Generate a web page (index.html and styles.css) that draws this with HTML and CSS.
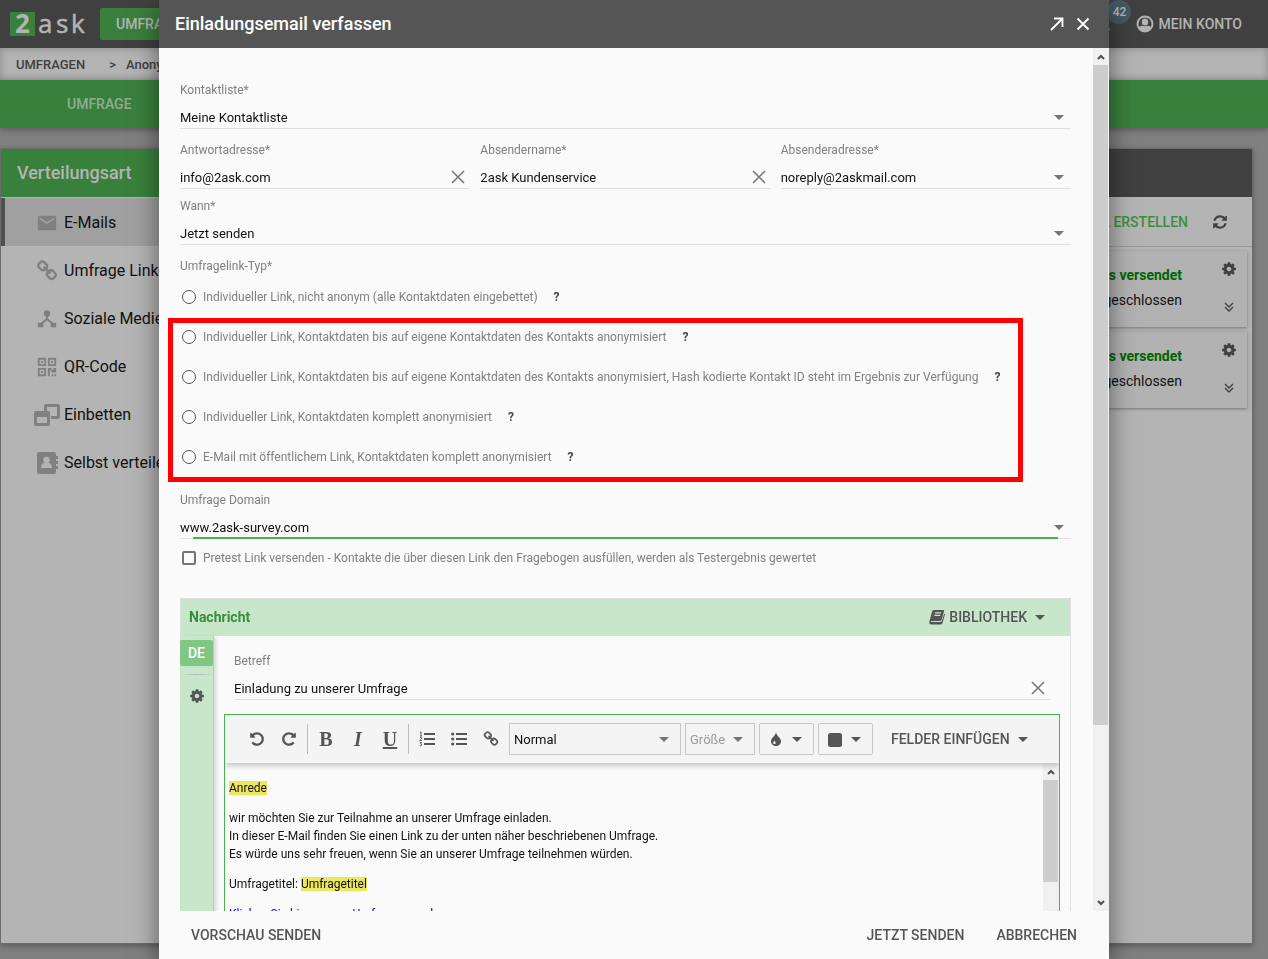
FILE: index.html
```html
<!DOCTYPE html>
<html lang="de">
<head>
<meta charset="utf-8">
<meta name="viewport" content="width=device-width, initial-scale=1">
<title>Einladungsemail verfassen</title>
<link rel="stylesheet" href="styles.css">
</head>
<body>
<svg class="sprite" aria-hidden="true">
  <symbol id="caret" viewBox="0 0 10 5"><path d="M0 0h10L5 5z"/></symbol>
  <symbol id="cross" viewBox="0 0 14 14"><path d="M1 1l12 12M13 1L1 13" fill="none" stroke="currentColor" stroke-width="1.5"/></symbol>
  <symbol id="cog" viewBox="0 0 1792 1792"><path d="M1152 896q0-106-75-181t-181-75-181 75-75 181 75 181 181 75 181-75 75-181zm512-109v222q0 12-8 23t-20 13l-185 28q-19 54-39 91 35 50 107 138 10 12 10 25t-9 23q-27 37-99 108t-94 71q-12 0-26-9l-138-108q-44 23-91 38-16 136-29 186-7 28-36 28h-222q-14 0-24.5-8.5t-11.5-21.5l-28-184q-49-16-90-37l-141 107q-10 9-25 9-14 0-25-11-126-114-165-168-7-10-7-23 0-12 8-23 15-21 51-66.5t54-70.5q-27-50-41-99l-183-27q-13-2-21-12.5t-8-23.5v-222q0-12 8-23t19-13l186-28q14-46 39-92-40-57-107-138-10-12-10-24 0-10 9-23 26-36 98.5-107.5t94.5-71.5q13 0 26 10l138 107q44-23 91-38 16-136 29-186 7-28 36-28h222q14 0 24.5 8.5t11.5 21.5l28 184q49 16 90 37l142-107q9-9 24-9 13 0 25 10 129 119 165 170 7 8 7 22 0 12-8 23-15 21-51 66.5t-54 70.5q26 50 41 98l183 28q13 2 21 12.5t8 23.5z"/></symbol>
  <symbol id="chain" viewBox="0 0 1792 1792"><path d="M1520 1216q0-40-28-68l-208-208q-28-28-68-28-42 0-72 32 3 3 19 18.5t21.5 21.5 15 19 13 25.5 3.5 27.5q0 40-28 68t-68 28q-15 0-27.5-3.5t-25.5-13-19-15-21.5-21.5-18.5-19q-33 31-33 73 0 40 28 68l206 207q27 27 68 27 40 0 68-26l147-146q28-28 28-67zm-703-705q0-40-28-68l-206-207q-28-28-68-28-39 0-68 27l-147 146q-28 28-28 67 0 40 28 68l208 208q27 27 68 27 42 0 72-31-3-3-19-18.5t-21.5-21.5-15-19-13-25.5-3.5-27.5q0-40 28-68t68-28q15 0 27.5 3.5t25.5 13 19 15 21.5 21.5 18.5 19q33-31 33-73zm895 705q0 120-85 203l-147 146q-83 83-203 83-121 0-204-85l-206-207q-83-83-83-203 0-123 88-209l-88-88q-86 88-208 88-120 0-204-84l-208-208q-84-84-84-204t85-203l147-146q83-83 203-83 121 0 204 85l206 207q83 83 83 203 0 123-88 209l88 88q86-88 208-88 120 0 204 84l208 208q84 84 84 204z"/></symbol>
  <symbol id="rotate" viewBox="0 0 1792 1792"><path d="M1664 896q0 156-61 298t-164 245-245 164-298 61q-172 0-327-72.500t-264-204.500q-7-10-6.500-22.500t8.500-20.500l137-138q10-9 25-9 16 2 23 12 73 95 179 147t225 52q104 0 198.500-40.500t163.500-109.500 109.500-163.500 40.500-198.500-40.500-198.500-109.500-163.500-163.500-109.500-198.500-40.500q-98 0-188 35.500t-160 101.500l137 138q31 30 14 69-17 40-59 40h-448q-26 0-45-19t-19-45v-448q0-42 40-59 39-17 69 14l130 129q107-101 244.500-156.500t284.500-55.500q156 0 298 61t245 164 164 245 61 298z"/></symbol>
  <symbol id="chevrons" viewBox="0 0 10 10"><path d="M1 1l4 4 4-4M1 5l4 4 4-4" fill="none" stroke="currentColor" stroke-width="1.4"/></symbol>
  <symbol id="arrow-up" viewBox="0 0 8 6"><path d="M1 5l3-3 3 3" fill="none" stroke="currentColor" stroke-width="2"/></symbol>
  <symbol id="arrow-down" viewBox="0 0 8 6"><path d="M1 1l3 3 3-3" fill="none" stroke="currentColor" stroke-width="2"/></symbol>
</svg>

<header class="topbar">
  <svg class="logo" viewBox="0 0 76 26" role="img" aria-label="2ask">
    <rect x="0" y="1" width="25" height="24" fill="#3a803d"/>
    <g fill="#b4b4b4" font-family="Open Sans, sans-serif" font-size="26">
      <text x="5" y="22" font-weight="700">2</text>
      <text x="28" y="22" font-weight="500" stroke="#b4b4b4" stroke-width=".5">a</text><text x="46" y="22" stroke="#b4b4b4" stroke-width=".5">s</text><text x="61" y="22" stroke="#b4b4b4" stroke-width=".5">k</text>
    </g>
  </svg>
  <button class="topbar-main">UMFRAGEN</button>
  <div class="topbar-spacer"></div>
  <button class="topbar-bell" aria-label="Benachrichtigungen">
    <svg class="icon-18" viewBox="0 0 24 24"><path d="M12 22a2 2 0 0 0 2-2h-4a2 2 0 0 0 2 2zm7-5v-6c0-3-2-6-5-7V3h-4v1c-3 1-5 4-5 7v6l-2 2v1h18v-1z"/></svg>
    <span class="badge">42</span>
  </button>
  <button class="topbar-account">
    <svg class="icon-18" viewBox="0 0 18 18"><circle cx="9" cy="9" r="7.500" fill="none" stroke="currentColor" stroke-width="1.900"/><ellipse cx="9" cy="7" rx="3.200" ry="3.500"/><path d="M2.500 12.500c2-2 4-2 6.500-1.200 2.500-.8 4.500-.8 6.500 1.200-1 2.500-3.500 4.500-6.500 4.500s-5.500-2-6.500-4.500z"/></svg>
    MEIN KONTO
  </button>
</header>
<nav class="breadcrumbs" aria-label="Pfad"><a href="#">UMFRAGEN</a><span>&gt;</span><a href="#">Anonyme Umfrage</a></nav>
<nav class="tabs"><a href="#">UMFRAGE</a></nav>

<main class="page">
  <div class="panel">
    <aside class="side">
      <h2 class="side-title">Verteilungsart</h2>
      <button class="side-item side-item-active"><svg viewBox="0 0 24 24"><path d="M20 4H4c-1.100 0-2 .9-2 2v12c0 1.100.9 2 2 2h16c1.100 0 2-.9 2-2V6c0-1.100-.9-2-2-2zm0 4l-8 5-8-5V6l8 5 8-5v2z"/></svg>E-Mails</button>
      <button class="side-item"><svg viewBox="0 0 1792 1792"><use href="#chain"/></svg>Umfrage Link</button>
      <button class="side-item"><svg viewBox="0 0 24 24"><circle cx="12" cy="6" r="3.500"/><path d="M12 7v6M12 12l-7 6M12 12l7 6" stroke="currentColor" stroke-width="2.200"/><path d="M2 16h6v5H2zM16 16h6v5h-6z"/></svg>Soziale Medien</button>
      <button class="side-item"><svg viewBox="0 0 24 24"><path d="M3 3h7v7H3zM14 3h7v7h-7zM3 14h7v7H3z" fill="none" stroke="currentColor" stroke-width="2"/><path d="M5.500 5.500h2v2h-2zM16.500 5.500h2v2h-2zM5.500 16.500h2v2h-2zM13 13h4v2h2v-2h3v5h-5v-2h-2v6h-2zM17 20h2v2h-2zM20 20h2v2h-2z"/></svg>QR-Code</button>
      <button class="side-item"><svg class="wide" viewBox="0 0 26 24"><path d="M11.500 8V3.500q0-1 1-1h11q1 0 1 1v10q0 1-1 1H17" fill="none" stroke="currentColor" stroke-width="3"/><path d="M2 8h12q2 0 2 2v11q0 2-2 2H2q-2 0-2-2V10q0-2 2-2zm1 6v6h10v-6z" fill-rule="evenodd"/></svg>Einbetten</button>
      <button class="side-item"><svg viewBox="0 0 22 22"><path d="M3 0h15q2 0 2 2v2h2v3h-2v2h2v3h-2v2h2v3h-2v3q0 2-2 2H3q-2 0-2-2V2q0-2 2-2z"/><circle cx="10.500" cy="8" r="3.200" fill="#b4b4b4"/><path d="M5 16c0-4 2-5 4-5h3c2 0 4 1 4 5z" fill="#b4b4b4"/></svg>Selbst verteilen</button>
    </aside>
    <section class="mails">
      <div class="mails-head"></div>
      <div class="mails-actions">
        <button class="create">E-MAIL ERSTELLEN</button>
        <button class="reload" aria-label="Aktualisieren"><svg viewBox="0 0 1792 1792"><path d="M1639 1056q0 5-1 7-64 268-268 434.500t-478 166.500q-146 0-282.500-55t-243.500-157l-129 129q-19 19-45 19t-45-19-19-45v-448q0-26 19-45t45-19h448q26 0 45 19t19 45-19 45l-137 137q71 66 161 102t187 36q134 0 250-65t186-179q11-17 53-117 8-23 30-23h192q13 0 22.500 9.500t9.500 22.500zm25-800v448q0 26-19 45t-45 19h-448q-26 0-45-19t-19-45 19-45l138-138q-148-137-349-137-134 0-250 65t-186 179q-11 17-53 117-8 23-30 23h-199q-13 0-22.500-9.500t-9.500-22.500v-7q65-268 270-434.500t480-166.500q146 0 284 55.500t245 156.500l130-129q19-19 45-19t45 19 19 45z"/></svg></button>
      </div>
      <article class="mail">
        <div class="mail-text"><strong>E-Mails versendet</strong><span>Abgeschlossen</span></div>
        <div class="mail-tools"><button aria-label="Einstellungen"><svg class="icon-16"><use href="#cog"/></svg></button><button aria-label="Details"><svg class="icon-10"><use href="#chevrons"/></svg></button></div>
      </article>
      <article class="mail">
        <div class="mail-text"><strong>E-Mails versendet</strong><span>Abgeschlossen</span></div>
        <div class="mail-tools"><button aria-label="Einstellungen"><svg class="icon-16"><use href="#cog"/></svg></button><button aria-label="Details"><svg class="icon-10"><use href="#chevrons"/></svg></button></div>
      </article>
    </section>
  </div>
</main>

<div class="overlay">
<div class="dialog" role="dialog" aria-labelledby="dialog-title">
  <header class="dialog-head">
    <h1 id="dialog-title">Einladungsemail verfassen</h1>
    <button aria-label="Maximieren"><svg class="icon-14" viewBox="0 0 14 14"><path d="M1 13L12.500 1.500M4 1.500h8.500V10" fill="none" stroke="currentColor" stroke-width="1.800"/></svg></button>
    <button aria-label="Schließen"><svg class="icon-14" viewBox="0 0 14 14"><path d="M1.500 1.500l11 11M12.500 1.500l-11 11" fill="none" stroke="currentColor" stroke-width="1.800"/></svg></button>
  </header>

  <div class="dialog-middle">
    <form class="form">
      <div class="field">
        <label for="list">Kontaktliste*</label>
        <div class="control"><select id="list"><option>Meine Kontaktliste</option></select><svg class="caret"><use href="#caret"/></svg></div>
      </div>
      <div class="columns">
        <div class="field">
          <label for="reply">Antwortadresse*</label>
          <div class="control"><input id="reply" type="text" value="info@2ask.com"><button type="button" class="clear" aria-label="Leeren"><svg><use href="#cross"/></svg></button></div>
        </div>
        <div class="field">
          <label for="sender">Absendername*</label>
          <div class="control"><input id="sender" type="text" value="2ask Kundenservice"><button type="button" class="clear" aria-label="Leeren"><svg><use href="#cross"/></svg></button></div>
        </div>
        <div class="field">
          <label for="from">Absenderadresse*</label>
          <div class="control"><select id="from"><option>noreply@2askmail.com</option></select><svg class="caret"><use href="#caret"/></svg></div>
        </div>
      </div>
      <div class="field field-when">
        <label for="when">Wann*</label>
        <div class="control"><select id="when"><option>Jetzt senden</option></select><svg class="caret"><use href="#caret"/></svg></div>
      </div>

      <div class="link-type" role="radiogroup" aria-labelledby="type-label">
        <div class="group-label" id="type-label">Umfragelink-Typ*</div>
        <div class="option"><label><input type="radio" name="type">Individueller Link, nicht anonym (alle Kontaktdaten eingebettet)</label><button type="button" class="help">?</button></div>
        <div class="marked">
          <div class="option"><label><input type="radio" name="type">Individueller Link, Kontaktdaten bis auf eigene Kontaktdaten des Kontakts anonymisiert</label><button type="button" class="help">?</button></div>
          <div class="option"><label><input type="radio" name="type">Individueller Link, Kontaktdaten bis auf eigene Kontaktdaten des Kontakts anonymisiert, Hash kodierte Kontakt ID steht im Ergebnis zur Verfügung</label><button type="button" class="help">?</button></div>
          <div class="option"><label><input type="radio" name="type">Individueller Link, Kontaktdaten komplett anonymisiert</label><button type="button" class="help">?</button></div>
          <div class="option"><label><input type="radio" name="type">E-Mail mit öffentlichem Link, Kontaktdaten komplett anonymisiert</label><button type="button" class="help">?</button></div>
        </div>
      </div>

      <div class="field field-domain">
        <label for="domain">Umfrage Domain</label>
        <div class="control control-focus"><select id="domain"><option>www.2ask-survey.com</option></select><svg class="caret"><use href="#caret"/></svg></div>
      </div>
      <div class="check"><label><input type="checkbox">Pretest Link versenden - Kontakte die über diesen Link den Fragebogen ausfüllen, werden als Testergebnis gewertet</label></div>

      <section class="message">
        <header class="message-head">
          <h2>Nachricht</h2>
          <button type="button"><svg class="icon-16" viewBox="0 0 16 16"><path d="M5 1h9q1.500 0 1 1.500L12.500 11q-.3 1-1.500 1H3q-1.500 0-1 1h9.500q1 0 1.300-1L15.300 4.500q1 .5.500 1.500l-2.300 8q-.4 1.500-2 1.500H2Q0 15.500.3 13q0-1 .5-2L3 2.500Q3.500 1 5 1zm1.200 2.200L5.900 4.400h6l.3-1.200zM5.500 5.800L5.200 7h6l.3-1.200z" fill-rule="evenodd"/></svg>BIBLIOTHEK<svg class="caret-icon"><use href="#caret"/></svg></button>
        </header>
        <div class="message-main">
          <div class="languages">
            <button type="button" class="language">DE</button>
            <div class="languages-line"></div>
            <button type="button" class="languages-settings" aria-label="Spracheinstellungen"><svg class="icon-16"><use href="#cog"/></svg></button>
          </div>
          <div class="compose">
            <div class="field field-subject">
              <label for="subject">Betreff</label>
              <div class="control"><input id="subject" type="text" value="Einladung zu unserer Umfrage"><button type="button" class="clear" aria-label="Leeren"><svg><use href="#cross"/></svg></button></div>
            </div>
            <div class="editor">
              <div class="toolbar">
                <button type="button" class="tool" aria-label="Rückgängig"><svg class="icon-16"><use href="#rotate"/></svg></button>
                <button type="button" class="tool" aria-label="Wiederholen"><svg class="icon-16 mirrored"><use href="#rotate"/></svg></button>
                <span class="divider"></span>
                <button type="button" class="tool letter">B</button>
                <button type="button" class="tool letter italic">I</button>
                <button type="button" class="tool letter underlined">U</button>
                <span class="divider"></span>
                <button type="button" class="tool" aria-label="Nummerierte Liste"><svg class="icon-16" viewBox="0 0 16 16"><path d="M5 2h11v2H5zM5 7h11v2H5zM5 12h11v2H5z"/><path d="M1 1.500l1-.7V5M1 5h2M.8 6.500h1.700v1.200L.8 9.500h2.200M.8 11.500h1.800l-1 1.300q1.400 0 1.200 1.200-.2 1-2 .8" fill="none" stroke="currentColor" stroke-width=".9"/></svg></button>
                <button type="button" class="tool" aria-label="Aufzählung"><svg class="icon-16" viewBox="0 0 16 16"><path d="M5 2h11v2H5zM5 7h11v2H5zM5 12h11v2H5z"/><circle cx="1.700" cy="3" r="1.600"/><circle cx="1.700" cy="8" r="1.600"/><circle cx="1.700" cy="13" r="1.600"/></svg></button>
                <button type="button" class="tool" aria-label="Link"><svg class="icon-16"><use href="#chain"/></svg></button>
                <div class="picker picker-format"><select aria-label="Format"><option>Normal</option></select><svg class="caret"><use href="#caret"/></svg></div>
                <div class="picker picker-size"><select aria-label="Größe"><option>Größe</option></select><svg class="caret"><use href="#caret"/></svg></div>
                <button type="button" class="swatch" aria-label="Textfarbe"><svg class="icon-16" viewBox="0 0 16 16"><path fill-rule="evenodd" d="M8 1.500c.8 3.500 5 5.500 5 9a5 4.500 0 0 1-10 0c0-3.500 4.200-5.500 5-9zM6.500 9.500c-.5 1-1.500 1.600-1.300 2.700.5 1.300 2.400 1 2.500-.3 0-1-.9-1.400-1.200-2.400z"/></svg><svg class="caret-icon"><use href="#caret"/></svg></button>
                <button type="button" class="swatch" aria-label="Hintergrundfarbe"><svg class="icon-16" viewBox="0 0 16 16"><rect x="1" y="2" width="14" height="14" rx="2.500"/></svg><svg class="caret-icon"><use href="#caret"/></svg></button>
                <button type="button" class="insert">FELDER EINFÜGEN<svg class="caret-icon"><use href="#caret"/></svg></button>
              </div>
              <div class="editor-main">
                <div class="editor-text" contenteditable="true">
                  <p><mark>Anrede</mark></p>
                  <p>wir möchten Sie zur Teilnahme an unserer Umfrage einladen.<br>In dieser E-Mail finden Sie einen Link zu der unten näher beschriebenen Umfrage.<br>Es würde uns sehr freuen, wenn Sie an unserer Umfrage teilnehmen würden.</p>
                  <p>Umfragetitel: <mark>Umfragetitel</mark></p>
                  <p><a href="#">Klicken Sie hier um zur Umfrage zu gelangen</a></p>
                </div>
                <div class="scrollbar scrollbar-editor" aria-hidden="true"><svg><use href="#arrow-up"/></svg><span class="thumb"></span></div>
              </div>
            </div>
          </div>
        </div>
      </section>
    </form>
    <div class="scrollbar" aria-hidden="true"><svg><use href="#arrow-up"/></svg><span class="thumb"></span><span class="rest"></span><svg><use href="#arrow-down"/></svg></div>
  </div>

  <footer class="dialog-foot">
    <button>VORSCHAU SENDEN</button>
    <span class="foot-spacer"></span>
    <button>JETZT SENDEN</button>
    <button>ABBRECHEN</button>
  </footer>
</div>
</div>
</body>
</html>
```
FILE: styles.css
```css
* { box-sizing: border-box; }

body {
  margin: 0;
  height: 100vh;
  overflow: hidden;
  display: flex;
  flex-direction: column;
  background: #808080;
  color: #111;
  font: 12px/16px Roboto, sans-serif;
}

button, input, select { font: inherit; color: inherit; }
button { margin: 0; padding: 0; border: 0; background: none; display: flex; align-items: center; cursor: pointer; }
a { color: inherit; text-decoration: none; }
h1, h2, p { margin: 0; }
svg { fill: currentColor; flex: none; display: block; }

.sprite { position: absolute; width: 0; height: 0; }
.icon-10 { width: 10px; height: 10px; }
.icon-14 { width: 14px; height: 14px; }
.icon-16 { width: 16px; height: 16px; }
.icon-18 { width: 18px; height: 18px; }
.mirrored { transform: scaleX(-1); }

/* Page behind the dialog */
.topbar {
  height: 48px;
  flex: none;
  display: flex;
  align-items: center;
  padding: 0 26px 0 10px;
  background: #404040;
  color: #b4b4b4;
  font-size: 14px;
  font-weight: 500;
}
.logo { width: 76px; height: 26px; }
.topbar-main { height: 32px; margin-left: 14px; padding: 0 16px; border-radius: 2px; background: #3a803d; }
.topbar-spacer { flex: 1; }
.topbar-bell { position: relative; height: 48px; margin-right: 24px; }
.badge {
  position: absolute;
  top: 0;
  left: 13px;
  width: 24px;
  height: 24px;
  border-radius: 50%;
  background: #435964;
  font-size: 12px;
  line-height: 24px;
  text-align: center;
}
.topbar-account { gap: 4px; }

.breadcrumbs {
  height: 32px;
  flex: none;
  display: flex;
  align-items: center;
  gap: 10px;
  padding: 2px 16px 0;
  background: #b4b4b4;
  box-shadow: inset 0 0 8px #888;
  color: #404040;
  font-size: 13px;
  font-weight: 500;
}
.breadcrumbs span { margin-left: 14px; }

.tabs {
  height: 48px;
  flex: none;
  display: flex;
  align-items: center;
  padding: 0 67px;
  background: #3a803d;
  box-shadow: 0 2px 6px rgba(0, 0, 0, .3);
  color: #8fae90;
  font-size: 14px;
  font-weight: 500;
}

.page { flex: 1; min-height: 0; display: flex; padding: 20px 15px 15px 0; }
.panel { flex: 1; display: flex; border: 1px solid #6c6c6c; background: #b4b4b4; box-shadow: 0 2px 6px rgba(0, 0, 0, .3); }
.side { width: 280px; flex: none; }
.side-title { height: 48px; padding: 0 16px; background: #3a803d; color: #b4b4b4; font-size: 18px; font-weight: 500; line-height: 48px; }
.side-item { width: 100%; height: 48px; gap: 6px; padding: 1px 0 0 35px; font-size: 16px; }
.side-item svg { width: 22px; height: 22px; color: #808080; }
.side-item .wide { width: 26px; height: 24px; margin-left: -2px; margin-right: -2px; }
.side-item-active { margin-top: 1px; border-left: 4px solid #505050; padding-left: 31px; background: #a0a0a0; }

.mails { flex: 1; min-width: 0; }
.mails-head { height: 48px; background: #404040; }
.mails-actions {
  height: 50px;
  display: flex;
  align-items: center;
  justify-content: flex-end;
  gap: 24px;
  padding-right: 24px;
  border-bottom: 1px solid #999;
  color: #404040;
}
.create { color: #3a8f3e; font-size: 14px; font-weight: 500; }
.reload svg { width: 16px; height: 16px; }
.mail {
  height: 76px;
  display: flex;
  justify-content: flex-end;
  gap: 39px;
  margin: 4px 5px 5px 0;
  padding: 0 10px;
  background: #b2b2b2;
  box-shadow: 0 1px 3px rgba(0, 0, 0, .35);
}
.mail-text { display: flex; flex-direction: column; gap: 9px; padding-top: 16px; text-align: right; font-size: 14px; }
.mail-text strong { color: #006400; }
.mail-tools { display: flex; flex-direction: column; align-items: center; gap: 25px; padding-top: 10px; color: #404040; }

/* Dialog frame */
.overlay { position: fixed; inset: 0; display: flex; justify-content: center; }
.dialog {
  width: 100%;
  max-width: 950px;
  height: 100%;
  display: flex;
  flex-direction: column;
  background: #fafafa;
  box-shadow: 0 8px 24px rgba(0, 0, 0, .5);
}
.dialog-head { height: 48px; flex: none; display: flex; align-items: center; gap: 12px; padding: 0 19px 0 16px; background: #555; color: #fff; }
.dialog-head h1 { flex: 1; font-size: 18px; font-weight: 500; }
.dialog-middle { flex: 1; min-height: 0; display: flex; overflow: hidden; }
.dialog-foot { height: 48px; flex: none; display: flex; align-items: center; gap: 32px; padding: 0 32px; color: #555; font-size: 14px; font-weight: 500; }
.foot-spacer { flex: 1; }

.scrollbar { width: 16px; flex: none; display: flex; flex-direction: column; background: #f0f0f0; color: #505050; }
.scrollbar svg { width: 8px; height: 6px; margin: 6px 4px 5px; }
.thumb { flex: 660; margin-right: 1px; background: #cdcdcd; }
.rest { flex: 169; }

/* Form */
.form { flex: 1; min-width: 0; padding: 34px 22px 0 21px; }
.field { display: flex; flex-direction: column; gap: 8px; color: #808080; }
.control { height: 23px; display: flex; align-items: center; border-bottom: 1px solid #e0e0e0; }
.control input, .control select, .picker select {
  flex: 1;
  min-width: 0;
  height: 20px;
  margin: 0;
  padding: 0;
  border: 0;
  outline: 0;
  appearance: none;
  background: none;
  color: #111;
  font-size: 13px;
}
.control select, .picker select { height: 22px; padding-top: 2px; }
.caret { width: 10px; height: 5px; margin-right: 7px; color: #757575; pointer-events: none; }
.caret-icon { width: 10px; height: 5px; }
.clear { margin-right: 5px; color: #757575; }
.clear svg { width: 14px; height: 14px; }
.columns { display: grid; grid-template-columns: repeat(3, 1fr); gap: 10px; margin-top: 13px; }
.field-when { margin-top: 9px; }
.group-label { margin: 13px 0 3px; color: #808080; }
.option { height: 40px; display: flex; align-items: center; gap: 16px; }
.option label, .check label { display: flex; align-items: center; gap: 7px; color: #808080; }
.option input, .check input { width: 14px; height: 14px; flex: none; margin: 0 0 0 2px; appearance: none; border: 1px solid #555; border-radius: 50%; }
.check input { border: 2px solid #757575; border-radius: 2px; }
.help { color: #444; font-weight: 700; }
.marked { position: relative; }
.marked::after {
  content: "";
  position: absolute;
  inset: 1px 48px -5px -12px;
  border: 5px solid #f00;
  pointer-events: none;
}
.field-domain { margin-top: 15px; }
.control-focus {
  border-bottom-color: transparent;
  background:
    linear-gradient(#4caf50, #4caf50) 50% 100% / calc(100% - 26px) 2px no-repeat border-box,
    linear-gradient(#e0e0e0, #e0e0e0) 0 100% / 100% 1px no-repeat border-box;
}
.check { height: 20px; display: flex; align-items: center; margin-top: 9px; }

/* Message card */
.message { margin-top: 30px; border: 1px solid #e0e0e0; }
.message-head {
  height: 37px;
  display: flex;
  align-items: center;
  justify-content: space-between;
  padding: 0 25px 0 8px;
  border-bottom: 1px solid #dcdcdc;
  background: #c8e6c9;
  color: #555;
}
.message-head h2 { color: #388e3c; font-size: 14px; font-weight: 700; }
.message-head button { gap: 4px; font-size: 14px; font-weight: 500; }
.message-head .caret-icon { margin-left: 4px; }
.message-main { display: flex; }
.languages {
  width: 34px;
  flex: none;
  display: flex;
  flex-direction: column;
  align-items: center;
  margin-left: -1px;
  padding-top: 4px;
  border-right: 1px solid #c4c4c4;
  background: #c8e6c9;
  box-shadow: 3px 0 4px -1px rgba(0, 0, 0, .15);
  color: #555;
}
.language { width: 33px; height: 26px; justify-content: center; border-radius: 2px; background: #81c784; color: #fff; font-size: 14px; font-weight: 500; }
.languages-line { width: 100%; height: 1px; margin: 8px 0 13px; background: linear-gradient(90deg, transparent, #b4b4b4, transparent); }
.compose { flex: 1; min-width: 0; padding: 17px 10px 10px; }
.field-subject { margin: 0 10px 14px; }

.editor { border: 1px solid #4caf50; }
.toolbar {
  position: relative;
  height: 48px;
  display: flex;
  align-items: center;
  padding-left: 16px;
  background: #f4f4f4;
  box-shadow: 0 3px 5px rgba(0, 0, 0, .2);
  clip-path: inset(0 0 -10px 0);
  color: #555;
}
.tool { width: 32px; height: 32px; flex: none; justify-content: center; }
.letter { font: 700 20px "Liberation Serif", serif; }
.italic { font-style: italic; }
.underlined { text-decoration: underline; }
.divider { width: 1px; height: 30px; flex: none; margin: 0 2px; background: #bbb; }
.picker { height: 32px; display: flex; align-items: center; margin-left: 2px; padding-left: 4px; border: 1px solid #c8c8c8; }
.picker .caret { margin-right: 11px; }
.picker-format { width: 172px; }
.picker-size { width: 70px; margin-left: 4px; }
.picker-size select { color: #999; }
.swatch { width: 55px; height: 32px; flex: none; padding-left: 8px; gap: 8px; margin-left: 4px; border: 1px solid #c8c8c8; border-radius: 2px; }
.insert { gap: 8px; margin-left: 18px; font-size: 14px; font-weight: 500; white-space: nowrap; }
.editor-main { height: 320px; display: flex; }
.editor-text { flex: 1; padding: 16px 4px; outline: 0; line-height: 18px; }
.editor-text p { margin-bottom: 12px; }
.editor-text mark { background: #ece75f; color: inherit; }
.editor-text a { color: #00e; text-decoration: underline; }
.scrollbar-editor .thumb { flex: 0 0 102px; }
```
